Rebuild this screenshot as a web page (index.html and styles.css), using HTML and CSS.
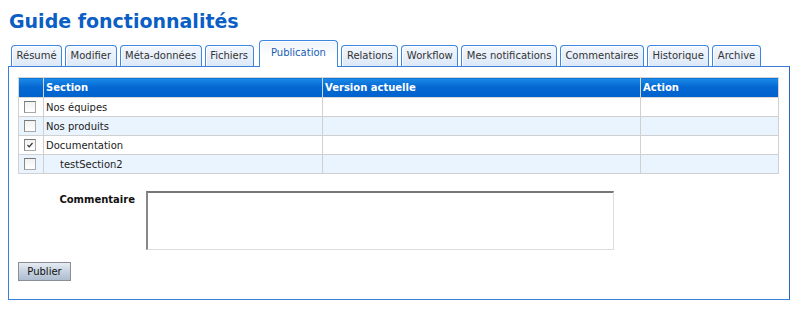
FILE: index.html
```html
<!DOCTYPE html>
<html>
<head>
  <meta charset="UTF-8">
  <title>Guide fonctionnalités</title>
  <link rel="stylesheet" href="styles.css">
</head>
<body>
  <h1 class="page-title">Guide fonctionnalités</h1>

  <div class="tabs">
    <a class="tab">Résumé</a>
    <a class="tab">Modifier</a>
    <a class="tab">Méta-données</a>
    <a class="tab">Fichiers</a>
    <a class="tab active">Publication</a>
    <a class="tab">Relations</a>
    <a class="tab">Workflow</a>
    <a class="tab">Mes notifications</a>
    <a class="tab">Commentaires</a>
    <a class="tab">Historique</a>
    <a class="tab">Archive</a>
  </div>

  <div class="panel">
    <table class="sections">
      <thead>
        <tr>
          <th class="col-check"></th>
          <th class="col-section">Section</th>
          <th class="col-version">Version actuelle</th>
          <th>Action</th>
        </tr>
      </thead>
      <tbody>
        <tr>
          <td><span class="checkbox"></span></td>
          <td>Nos équipes</td>
          <td></td>
          <td></td>
        </tr>
        <tr class="alt">
          <td><span class="checkbox"></span></td>
          <td>Nos produits</td>
          <td></td>
          <td></td>
        </tr>
        <tr>
          <td><span class="checkbox checked"><svg width="8" height="8" viewBox="0 0 8 8"><path d="M1.5 4 L3.2 5.8 L6.5 2" fill="none" stroke="#333" stroke-width="1.2"/></svg></span></td>
          <td>Documentation</td>
          <td></td>
          <td></td>
        </tr>
        <tr class="alt">
          <td><span class="checkbox"></span></td>
          <td class="sub">testSection2</td>
          <td></td>
          <td></td>
        </tr>
      </tbody>
    </table>

    <div class="comment-row">
      <label class="comment-label">Commentaire</label>
      <div class="textarea"></div>
    </div>

    <button class="btn">Publier</button>
  </div>
</body>
</html>
```

FILE: styles.css
```css
body {
  margin: 0;
  padding: 0 10px 0 8px;
  font-family: "DejaVu Sans", Verdana, sans-serif;
  font-size: 10px;
  color: #222;
  background: #fff;
}
.page-title {
  margin: 0;
  padding: 9px 0 0 1px;
  height: 41px;
  box-sizing: border-box;
  font-size: 19px;
  line-height: 24px;
  font-weight: bold;
  color: #0a5ec4;
}
.tabs {
  display: flex;
  align-items: flex-end;
  gap: 3px;
  padding-left: 3px;
  height: 25px;
}
.tab {
  display: block;
  height: 20px;
  line-height: 20px;
  padding: 0 4.5px;
  border: 1px solid #3f86e0;
  border-bottom: none;
  border-radius: 4px 4px 0 0;
  background: linear-gradient(#f3f7fd, #dde9f8);
  box-shadow: inset 1px 1px 0 #fff;
  color: #333;
  white-space: nowrap;
}
.tab.active {
  position: relative;
  height: 26px;
  margin-bottom: -1px;
  margin-left: 2px;
  padding: 0 11.5px;
  line-height: 24px;
  background: linear-gradient(#eef4fc, #fff 60%);
  color: #1a5fb4;
}
.panel {
  border: 1px solid #3c7fd8;
  border-right-color: #2a66c0;
  box-shadow: 0 1px 0 #9cc0ee;
  padding: 10px 10px 18px 9px;
}
.sections {
  width: 761px;
  border-collapse: collapse;
  border: 1px solid #cfcfcf;
}
.sections th,
.sections td {
  height: 18px;
  padding: 0 0 0 2px;
  border: 1px solid #d0d0d0;
  text-align: left;
}
.sections th {
  height: 19px;
  color: #fff;
  font-weight: bold;
  background: linear-gradient(#1a8be8, #0567d2 45%, #0062cc);
  border-color: #d6d6d6;
}
.col-check { width: 22px; }
.col-section { width: 276px; }
.col-version { width: 315px; }
.sections tr.alt td {
  background: #eaf4fe;
}
.sections td.sub {
  padding-left: 16px;
}
.checkbox {
  display: flex;
  align-items: center;
  justify-content: center;
  width: 10px;
  height: 10px;
  margin-left: 3px;
  border: 1px solid #a8a8a8;
  border-top-color: #777;
  border-left-color: #888;
  background: linear-gradient(#f2f2f2, #fff);
}
.comment-row {
  display: flex;
  gap: 11px;
  margin-top: 17px;
}
.comment-label {
  width: 117px;
  padding-top: 3px;
  text-align: right;
  font-weight: bold;
  color: #111;
}
.textarea {
  width: 465px;
  height: 56px;
  border: 1px solid #ddd;
  border-top: 2px solid #777;
  border-left: 2px solid #888;
  background: #fff;
}
.btn {
  display: block;
  margin-top: 12px;
  width: 53px;
  height: 19px;
  padding: 0;
  font-family: "DejaVu Sans", Verdana, sans-serif;
  font-size: 10px;
  color: #111;
  border: 1px solid #8a8f96;
  background: linear-gradient(#e6ecf3, #c6d2e0 50%, #aebdd0);
}
```
